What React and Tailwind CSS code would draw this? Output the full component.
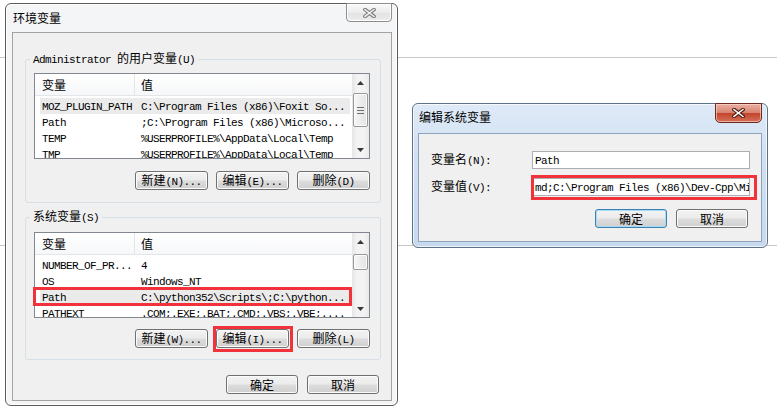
import React from "react";

const CJK = "font-['Noto_Sans_CJK_SC',sans-serif] text-[12px]";
const LAT = "font-['Liberation_Mono',monospace] text-[11px] tracking-[-0.6px]";
const RE = /([\u3000-\u9fff\uff00-\uffef]+)/;

function T({ s }) {
  return (
    <span className="whitespace-pre leading-[14px] text-black">
      {s
        .split(RE)
        .filter(Boolean)
        .map((p, i) =>
          RE.test(p) ? (
            <span key={i} className={CJK}>
              {p}
            </span>
          ) : (
            <span key={i} className={LAT}>
              {p}
            </span>
          )
        )}
    </span>
  );
}

function Btn({ s, w = "w-[73px]", focus = false }) {
  return (
    <div
      className={`flex h-[19px] ${w} shrink-0 items-center justify-center rounded-[3px] border ${
        focus
          ? "border-[#3c7fb1] shadow-[inset_0_0_0_1px_#a6dcf7]"
          : "border-[#707070] shadow-[inset_0_0_0_1px_#fbfbfb]"
      } bg-[linear-gradient(to_bottom,#f3f3f3_0%,#ebebeb_48%,#dddddd_52%,#cfcfcf_100%)]`}
    >
      <T s={s} />
    </div>
  );
}

function XIcon({ dark, light }) {
  const d = "M2 1.5 L11 8.5 M11 1.5 L2 8.5";
  return (
    <svg width="13" height="10" viewBox="0 0 13 10">
      <path d={d} stroke={dark} strokeWidth="3.6" strokeLinecap="square" />
      <path d={d} stroke={light} strokeWidth="1.5" strokeLinecap="square" />
    </svg>
  );
}

function Scrollbar({ thumb, grip }) {
  return (
    <div className="flex w-[17px] shrink-0 flex-col bg-[linear-gradient(to_right,#e6e6e6,#f3f3f3_30%,#f3f3f3_70%,#e9e9e9)]">
      <div className="flex h-[17px] shrink-0 items-center justify-center">
        <svg width="7" height="4" viewBox="0 0 7 4">
          <path d="M0 4L3.5 0L7 4Z" fill="#3a3a3a" />
        </svg>
      </div>
      <div className="flex-1 px-[1px]">
        <div
          className={`${thumb} flex items-center justify-center rounded-[2px] border border-[#979797] bg-[linear-gradient(to_right,#f6f6f6,#e3e3e3)] shadow-[inset_0_0_0_1px_#fdfdfd]`}
        >
          {grip && (
            <svg width="7" height="7" viewBox="0 0 7 7">
              <path d="M0 0.5H7M0 3.5H7M0 6.5H7" stroke="#6f6f6f" strokeWidth="1" />
            </svg>
          )}
        </div>
      </div>
      <div className="flex h-[17px] shrink-0 items-center justify-center">
        <svg width="7" height="4" viewBox="0 0 7 4">
          <path d="M0 0L3.5 4L7 0Z" fill="#3a3a3a" />
        </svg>
      </div>
    </div>
  );
}

function ListView({ rows, thumb, grip, children }) {
  return (
    <div className="relative flex h-[86px] w-[336px] border border-[#828790] bg-white">
      <div className="flex min-w-0 flex-1 flex-col overflow-hidden">
        <div className="flex h-[22px] shrink-0 items-stretch border-b border-[#e3e5e8] bg-[linear-gradient(to_bottom,#ffffff,#f6f7f9)]">
          <div className="flex w-[100px] items-center border-r border-[#e3e5e8] pl-[7px]">
            <T s="变量" />
          </div>
          <div className="flex items-center pl-[6px]">
            <T s="值" />
          </div>
        </div>
        <div className="pt-[2px]">
          {rows.map(([k, v, sel], i) => (
            <div
              key={i}
              className={`ml-[5px] mr-[2px] flex h-[16px] items-center whitespace-nowrap ${
                sel ? "bg-[#ebebeb]" : ""
              }`}
            >
              <div className="flex w-[95px] shrink-0 items-center pl-[2px]">
                <T s={k} />
              </div>
              <div className="flex items-center pl-[6px]">
                <T s={v} />
              </div>
            </div>
          ))}
        </div>
      </div>
      <Scrollbar thumb={thumb} grip={grip} />
      {children}
    </div>
  );
}

const list1 = [
  ["MOZ_PLUGIN_PATH", "C:\\Program Files (x86)\\Foxit So...", true],
  ["Path", ";C:\\Program Files (x86)\\Microso..."],
  ["TEMP", "%USERPROFILE%\\AppData\\Local\\Temp"],
  ["TMP", "%USERPROFILE%\\AppData\\Local\\Temp"],
];

const list2 = [
  ["NUMBER_OF_PR...", "4"],
  ["OS", "Windows_NT"],
  ["Path", "C:\\python352\\Scripts\\;C:\\python...", true],
  ["PATHEXT", ".COM;.EXE;.BAT;.CMD;.VBS;.VBE;...."],
];

const RED = "border-[3px] border-[#f2323a]";

function MainWindow() {
  return (
    <div className="absolute left-[5px] top-[3px] flex h-[403px] w-[393px] flex-col rounded-[6px] border border-[#5c5c5c] bg-[#f4f5f6] pb-[4px] pl-[6px] pr-[5px] shadow-[inset_0_0_0_1px_#ffffff]">
      <div className="flex h-[28px] shrink-0 items-start justify-between">
        <div className="flex pl-[1px] pt-[7px]">
          <T s="环境变量" />
        </div>
        <div className="-mt-[1px] flex h-[19px] w-[46px] items-center justify-center rounded-b-[4px] border border-[#8e8e8e] bg-[linear-gradient(to_bottom,#fafafa,#ececec_50%,#e2e2e2_51%,#ededed)] shadow-[inset_0_0_0_1px_#ffffff]">
          <XIcon dark="#7c7c7c" light="#f4f4f4" />
        </div>
      </div>
      <div className="flex flex-1 flex-col border border-[#a3a3a3] bg-[#f0f0f0]">
        <fieldset className="ml-[12px] mt-[18px] w-[356px] rounded-[3px] border border-[#d5dfe5] pb-[12px] pl-[8px] pr-[10px] pt-[6px]">
          <legend className="-ml-[4px] px-[3px] leading-[14px]">
            <T s="Administrator 的用户变量(U)" />
          </legend>
          <ListView rows={list1} thumb="mt-[2px] h-[34px]" grip />
          <div className="mt-[12px] flex justify-end gap-[8px]">
            <Btn s="新建(N)..." />
            <Btn s="编辑(E)..." />
            <Btn s="删除(D)" />
          </div>
        </fieldset>
        <fieldset className="ml-[12px] mt-[6px] w-[356px] rounded-[3px] border border-[#d5dfe5] pb-[11px] pl-[8px] pr-[10px] pt-[7px]">
          <legend className="-ml-[4px] px-[3px] leading-[14px]">
            <T s="系统变量(S)" />
          </legend>
          <ListView rows={list2} thumb="mt-[4px] h-[16px]">
            <div className={`absolute left-[-2px] top-[54px] h-[19px] w-[319px] ${RED}`} />
          </ListView>
          <div className="mt-[11px] flex justify-end gap-[8px]">
            <Btn s="新建(W)..." />
            <div className="relative">
              <Btn s="编辑(I)..." />
              <div className={`absolute -bottom-[4px] -left-[3px] -right-[4px] -top-[3px] ${RED}`} />
            </div>
            <Btn s="删除(L)" />
          </div>
        </fieldset>
        <div className="mt-[15px] flex justify-end gap-[9px] pr-[12px]">
          <Btn s="确定" w="w-[72px]" />
          <Btn s="取消" w="w-[72px]" />
        </div>
      </div>
    </div>
  );
}

function EditDialog() {
  return (
    <div className="absolute left-[412px] top-[103px] flex h-[145px] w-[356px] flex-col rounded-[6px] border border-[#5f7186] bg-[linear-gradient(to_bottom,#dfeaf7,#cfe0f2_40%,#c6d9ee)] px-[5px] pb-[5px] shadow-[inset_0_0_0_1px_rgba(255,255,255,0.7)]">
      <div className="flex h-[29px] shrink-0 items-start justify-between">
        <div className="flex pl-[1px] pt-[6px]">
          <T s="编辑系统变量" />
        </div>
        <div className="-mt-[1px] flex h-[20px] w-[47px] items-center justify-center rounded-b-[5px] border border-[#6c2b21] bg-[linear-gradient(to_bottom,#eab0a2,#d98470_48%,#c4452c_52%,#d27157)] shadow-[inset_0_0_0_1px_rgba(255,220,210,0.6)]">
          <XIcon dark="#4e1a12" light="#ffffff" />
        </div>
      </div>
      <div className="flex flex-1 flex-col border border-[#8fa3ba] bg-[#f0f0f0]">
        <div className="mt-[17px] flex items-center">
          <div className="flex w-[113px] shrink-0 items-center pl-[12px]">
            <T s="变量名(N):" />
          </div>
          <div className="flex h-[18px] w-[218px] items-center overflow-hidden border border-[#abadb3] bg-white pl-[2px]">
            <T s="Path" />
          </div>
        </div>
        <div className="mt-[9px] flex items-center">
          <div className="flex w-[113px] shrink-0 items-center pl-[12px]">
            <T s="变量值(V):" />
          </div>
          <div className="relative">
            <div className="flex h-[18px] w-[218px] items-center overflow-hidden border border-[#abadb3] bg-white pl-[2px]">
              <T s="md;C:\Program Files (x86)\Dev-Cpp\Mi" />
            </div>
            <div className={`absolute -bottom-[4px] -left-[1px] -right-[7px] -top-[3px] ${RED}`} />
          </div>
        </div>
        <div className="mt-[13px] flex justify-end gap-[9px] pr-[13px]">
          <Btn s="确定" w="w-[72px]" focus />
          <Btn s="取消" w="w-[72px]" />
        </div>
      </div>
    </div>
  );
}

export default function App() {
  return (
    <div className="relative h-[409px] w-[777px] overflow-hidden bg-white font-['Noto_Sans_CJK_SC',sans-serif] text-[12px] leading-[14px]">
      <div className="absolute left-0 top-[57px] h-px w-full bg-[#c9c9c9]" />
      <div className="absolute left-0 top-[245px] h-px w-full bg-[#c9c9c9]" />
      <MainWindow />
      <EditDialog />
    </div>
  );
}
